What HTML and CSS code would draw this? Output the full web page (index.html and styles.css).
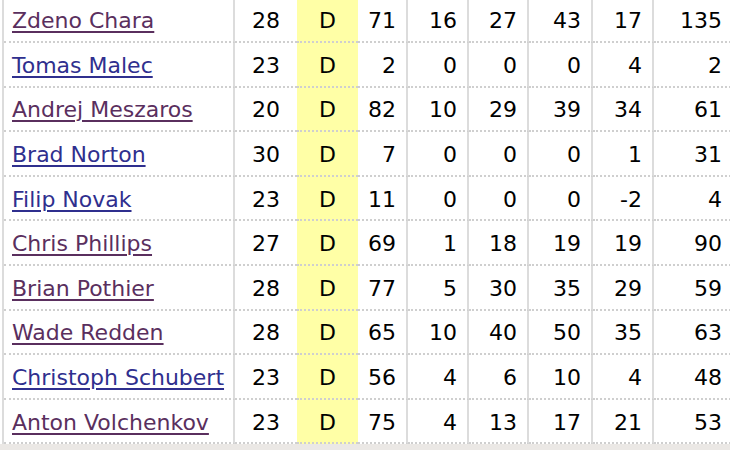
FILE: index.html
```html
<!DOCTYPE html>
<html>
<head>
<meta charset="utf-8">
<link rel="stylesheet" href="styles.css">
</head>
<body>
<div class="sheet">
  <div class="roster">
    <div class="c name"><a class="lnk v" href="#">Zdeno Chara</a></div><div class="c age">28</div><div class="c pos">D</div><div class="c n">71</div><div class="c n">16</div><div class="c n">27</div><div class="c n">43</div><div class="c n">17</div><div class="c n">135</div>
    <div class="c name"><a class="lnk u" href="#">Tomas Malec</a></div><div class="c age">23</div><div class="c pos">D</div><div class="c n">2</div><div class="c n">0</div><div class="c n">0</div><div class="c n">0</div><div class="c n">4</div><div class="c n">2</div>
    <div class="c name"><a class="lnk v" href="#">Andrej Meszaros</a></div><div class="c age">20</div><div class="c pos">D</div><div class="c n">82</div><div class="c n">10</div><div class="c n">29</div><div class="c n">39</div><div class="c n">34</div><div class="c n">61</div>
    <div class="c name"><a class="lnk u" href="#">Brad Norton</a></div><div class="c age">30</div><div class="c pos">D</div><div class="c n">7</div><div class="c n">0</div><div class="c n">0</div><div class="c n">0</div><div class="c n">1</div><div class="c n">31</div>
    <div class="c name"><a class="lnk u" href="#">Filip Novak</a></div><div class="c age">23</div><div class="c pos">D</div><div class="c n">11</div><div class="c n">0</div><div class="c n">0</div><div class="c n">0</div><div class="c n">-2</div><div class="c n">4</div>
    <div class="c name"><a class="lnk v" href="#">Chris Phillips</a></div><div class="c age">27</div><div class="c pos">D</div><div class="c n">69</div><div class="c n">1</div><div class="c n">18</div><div class="c n">19</div><div class="c n">19</div><div class="c n">90</div>
    <div class="c name"><a class="lnk v" href="#">Brian Pothier</a></div><div class="c age">28</div><div class="c pos">D</div><div class="c n">77</div><div class="c n">5</div><div class="c n">30</div><div class="c n">35</div><div class="c n">29</div><div class="c n">59</div>
    <div class="c name"><a class="lnk v" href="#">Wade Redden</a></div><div class="c age">28</div><div class="c pos">D</div><div class="c n">65</div><div class="c n">10</div><div class="c n">40</div><div class="c n">50</div><div class="c n">35</div><div class="c n">63</div>
    <div class="c name"><a class="lnk u" href="#">Christoph Schubert</a></div><div class="c age">23</div><div class="c pos">D</div><div class="c n">56</div><div class="c n">4</div><div class="c n">6</div><div class="c n">10</div><div class="c n">4</div><div class="c n">48</div>
    <div class="c name"><a class="lnk v" href="#">Anton Volchenkov</a></div><div class="c age">23</div><div class="c pos">D</div><div class="c n">75</div><div class="c n">4</div><div class="c n">13</div><div class="c n">17</div><div class="c n">21</div><div class="c n">53</div>
  </div>
</div>
</body>
</html>
```
FILE: styles.css
```css
html, body {
  margin: 0;
  padding: 0;
}
body {
  background: #ebe8e5;
  font-family: "DejaVu Sans", Verdana, sans-serif;
  font-size: 22px;
  color: #000;
  overflow: hidden;
  height: 450px;
}
.sheet {
  background: #fff;
  padding-left: 2px;
  margin-top: -1.6px;
}
.roster {
  display: grid;
  grid-template-columns: 231px 62px 61px 50px 61px 60px 64px 61px 80px;
  grid-auto-rows: 44.6px;
  border-left: 2px solid #dcdcdc;
  width: max-content;
}
.c {
  box-sizing: border-box;
  border-bottom: 2px dotted #cfcfcf;
  border-right: 2px solid #dcdcdc;
  display: flex;
  align-items: center;
  padding-top: 2px;
  white-space: nowrap;
}
.name {
  padding-left: 8px;
}
.age {
  justify-content: center;
  border-right: none;
}
.pos {
  justify-content: center;
  background: #ffffa6;
  border-right: none;
}
.n {
  justify-content: flex-end;
  padding-right: 10px;
}
.lnk {
  text-decoration: underline;
  text-decoration-thickness: 2px;
  text-underline-offset: 3px;
}
.lnk.v {
  color: #5a2f5e;
}
.lnk.u {
  color: #2f2f8e;
}
```
